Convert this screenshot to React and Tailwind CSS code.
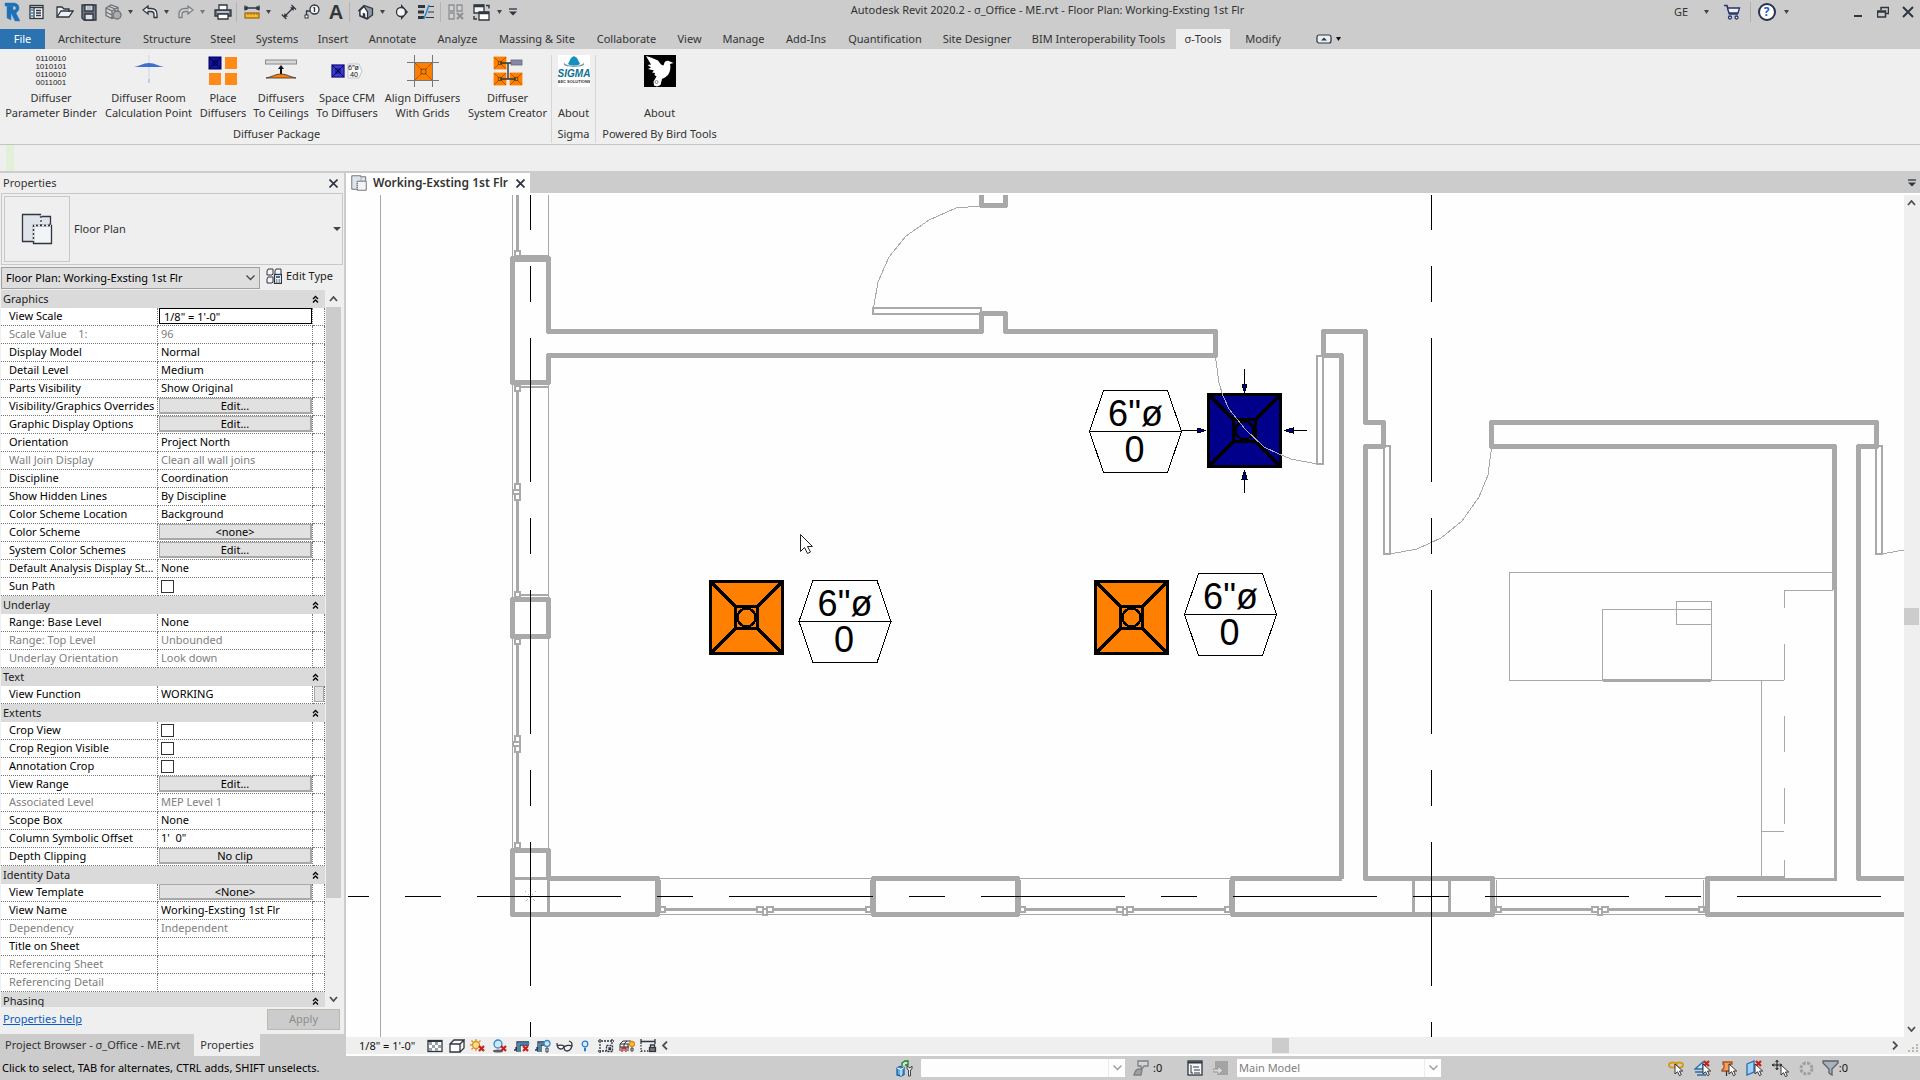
import React from "react";

const UI_FONT = "font-['Noto_Sans',sans-serif]";

function Ico({ w = 20, h = 20, children, className = "" }) {
  return (
    <svg
      width={w}
      height={h}
      viewBox={`0 0 ${w} ${h}`}
      fill="none"
      stroke="#2f3640"
      strokeWidth="1.3"
      className={`block shrink-0 ${className}`}
      aria-hidden="true"
    >
      {children}
    </svg>
  );
}

function Caret({ color = "#444", w = 6 }) {
  return (
    <Ico w={w} h={4}>
      <path d={`M0 0H${w}L${w / 2} 4Z`} fill={color} stroke="none" />
    </Ico>
  );
}

function Cross({ x = 0, y = 0, s = 6 }) {
  return <path d={`M${x} ${y}l${s} ${s}m0 -${s}l-${s} ${s}`} stroke="#c8201a" strokeWidth="2.2" />;
}

function Pointer({ x, y }) {
  return (
    <path
      d={`M${x} ${y}v10l2.5 -2.3l2 4l1.8 -1l-1.8 -3.7h3.2z`}
      fill="#fff"
      stroke="#222"
      strokeWidth="0.9"
    />
  );
}

/* ---------- Title bar ---------- */

const qat = [
  {
    label: "Revit", box: "w-6",
    icon: (
      <Ico w={16} h={20}>
        <path d="M1 1h8c4 0 6 2 6 5c0 3 -2 4 -3 5l4 8h-5l-4 -8v7l-4 -2v-12h6v4c2 0 3 -1 3 -2c0 -1 -1 -2 -3 -2h-8z" fill="#1f6fb5" stroke="#2b82c9" strokeWidth="0.5" />
      </Ico>
    ),
  },
  {
    label: "Home", box: "w-[26px]",
    icon: (
      <Ico w={16} h={16}>
        <rect x="1" y="1.5" width="13" height="13" fill="#f4f6f8" />
        <path d="M1 3.5h13M5 4v10M7 6.5h5M7 9h5M7 11.5h5" />
        <path d="M2 6h2M2 9h2M2 12h2" stroke="#2980c4" />
      </Ico>
    ),
  },
  {
    label: "Open", box: "w-[30px]",
    icon: (
      <Ico w={18} h={16}>
        <path d="M1 13V3h5l2 2h5v3M1 13l4 -6h12l-4 6z" fill="#eef1f4" />
      </Ico>
    ),
  },
  {
    label: "Save", box: "w-[18px]",
    icon: (
      <Ico w={16} h={17}>
        <path d="M1 1h14v15h-12l-2 -2z" fill="#6a7280" />
        <path d="M4 1h8v6h-8z" fill="#f6f8fa" />
        <path d="M4 10h8v6h-8z" fill="#dfe3e7" />
        <path d="M5.5 3h5M5.5 5h5" stroke="#a5acb5" />
      </Ico>
    ),
  },
  {
    label: "Synchronize", box: "w-[41px]", caret: "#444",
    icon: (
      <Ico w={17} h={17} className="opacity-60">
        <path d="M1 4l5 -3l7 2.5v8l-6 3l-6 -3zM1 4l6 3l6 -3.500M7 7v7M1 8l6 3M4 2.500l6 2.500v5" fill="#ddd" />
        <circle cx="12" cy="11" r="4" fill="#999" />
      </Ico>
    ),
  },
  {
    label: "Undo", box: "w-8", caret: "#444",
    icon: (
      <Ico w={16} h={16}>
        <path d="M1 6l5 -4v2.5h3c4 0 6 2 6 6v3h-3v-3c0 -2 -1 -3 -3 -3h-3v2.5z" fill="#eef1f4" />
      </Ico>
    ),
  },
  {
    label: "Redo", box: "w-10", caret: "#777",
    icon: (
      <Ico w={16} h={16} className="opacity-50">
        <path d="M15 6l-5 -4v2.5h-3c-4 0 -6 2 -6 6v3h3v-3c0 -2 1 -3 3 -3h3v2.5z" fill="#e4e4e4" />
      </Ico>
    ),
  },
  {
    label: "Print", box: "w-6", sep: true,
    icon: (
      <Ico w={18} h={16}>
        <path d="M5 6V1h8v5" fill="#fff" />
        <path d="M1 6h16v6h-16z" fill="#6a717c" />
        <path d="M4 10h10v5h-10z" fill="#fff" />
        <path d="M3 8h12" stroke="#e5e8eb" />
      </Ico>
    ),
  },
  {
    label: "Measure", box: "w-[39px]", caret: "#444",
    icon: (
      <Ico w={16} h={16}>
        <path d="M1 4h14M1 1.5v5M15 1.5v5M3.500 2.500l-2.500 1.500l2.500 1.500M12.500 2.500l2.500 1.500l-2.500 1.500" />
        <rect x="1" y="9" width="14" height="5" fill="#f7b731" stroke="#a06a10" />
        <path d="M4 9v2M7 9v2M10 9v2M13 9v2" stroke="#a06a10" strokeWidth="1" />
      </Ico>
    ),
  },
  {
    label: "Aligned Dimension", box: "w-[23px]",
    icon: (
      <Ico w={16} h={16}>
        <path d="M3 13L13 3M0.8 10.5l4.5 4.5M10.5 1l4.5 4.5" />
        <path d="M3 13l0.5 -4l3.5 3.5zM13 3l-4 0.5l3.5 3.5z" fill="#2f3640" stroke="none" />
      </Ico>
    ),
  },
  {
    label: "Tag by Category", box: "w-6",
    icon: (
      <Ico w={16} h={16}>
        <circle cx="10.5" cy="5.5" r="4.5" fill="#f4f4f4" />
        <path d="M10.5 3.2v4.8M9.5 4.2l1 -1M2.5 11V7h3.5" />
        <rect x="1" y="11" width="3" height="3" fill="#fff" strokeWidth="1" />
      </Ico>
    ),
  },
  { label: "Text", box: "w-6", text: "A", sep: true },
  {
    label: "Default 3D View", box: "w-10", caret: "#444",
    icon: (
      <Ico w={16} h={16}>
        <path d="M1 6.500l5 -5l8.500 3v6.500l-5.500 4l-7 -3v-5.500z" fill="#8e98a5" />
        <path d="M2 6.500l4 -4l3.500 5.500v6.500l-7.500 -3z" fill="#fff" />
        <path d="M5 9v3.500l2 0.800v-3.500z" fill="#2f3640" strokeWidth="0.5" />
      </Ico>
    ),
  },
  {
    label: "Section", box: "w-[22px]",
    icon: (
      <Ico w={16} h={16}>
        <path d="M7 0l7 8l-7 8z" fill="#2f3640" stroke="none" />
        <circle cx="7" cy="8" r="4.5" fill="#f4f4f4" />
      </Ico>
    ),
  },
  {
    label: "Thin Lines", box: "w-[26px]", sep: true,
    icon: (
      <Ico w={18} h={16}>
        <path d="M1 2.5h7M1 8h6M1 13.5h6" strokeWidth="3" />
        <path d="M12 2.5h5M11 8h6M9 13.5h8" strokeWidth="1.2" />
        <path d="M12 1L7 15" stroke="#2b8fd8" strokeWidth="1.6" />
      </Ico>
    ),
  },
  {
    label: "Close Inactive Views", box: "w-7",
    icon: (
      <Ico w={16} h={16} className="opacity-40">
        <path d="M1 1h5v6h-5zM9 1h5v6h-5zM1 9h5v6h-5z" fill="#ddd" />
        <path d="M9 9l6 6m0 -6l-6 6" strokeWidth="2" />
      </Ico>
    ),
  },
  {
    label: "Switch Windows", box: "w-[35px]", caret: "#444",
    icon: (
      <Ico w={18} h={17}>
        <path d="M1 1h10v8h-10z" fill="#f4f4f4" />
        <path d="M1 2h10" strokeWidth="2.5" />
        <path d="M6 8h10v8h-10z" fill="#fff" />
        <path d="M6 9h10" strokeWidth="2.5" />
        <path d="M13 1.5h3v3M1 12v3h3" strokeWidth="1.4" />
      </Ico>
    ),
  },
];

function TitleBar() {
  return (
    <header className="flex h-[29px] shrink-0 items-start bg-[#cccccc]">
      <div className="flex h-6 shrink-0 items-center">
        {qat.map((q) => (
          <React.Fragment key={q.label}>
            <button type="button" aria-label={q.label} className={`flex h-6 shrink-0 items-center justify-center gap-1.5 ${q.box}`}>
              {q.text ? <span className="font-['Liberation_Sans',sans-serif] text-xl leading-6 font-bold text-[#33373d]">{q.text}</span> : q.icon}
              {q.caret && <Caret color={q.caret} w={5} />}
            </button>
            {q.sep && <span className="mx-px h-5 w-px shrink-0 bg-[#b4b4b4]" />}
          </React.Fragment>
        ))}
        <button type="button" aria-label="Customize Quick Access Toolbar" className="flex h-6 w-4 items-center justify-center">
          <Ico w={8} h={8}>
            <path d="M0 1h8" />
            <path d="M0 3.5h8l-4 4z" fill="#2f3640" stroke="none" />
          </Ico>
        </button>
      </div>
      <h1 className="flex-1 truncate text-center text-[11px] leading-5 text-[#333]">
        Autodesk Revit 2020.2 - σ_Office - ME.rvt - Floor Plan: Working-Exsting 1st Flr
      </h1>
      <div className="ml-24 flex h-6 w-[250px] shrink-0 items-center text-[11px] text-[#333]">
        <span className="w-[34px] pl-1">GE</span>
        <span className="w-3"><Caret w={5} /></span>
        <button type="button" aria-label="App Store" className="ml-0.5 flex w-7 justify-center">
          <Ico w={17} h={16}>
            <path d="M0 1.500h3l2.500 8.500h8.500" stroke="#26346b" strokeWidth="1.6" />
            <path d="M3.500 4h12l-1.500 5h-9z" fill="#eef0f8" stroke="#26346b" />
            <circle cx="6" cy="13.5" r="1.5" fill="#fff" stroke="#26346b" />
            <circle cx="12.5" cy="13.5" r="1.5" fill="#fff" stroke="#26346b" />
          </Ico>
        </button>
        <span className="mx-1 h-5 w-px bg-[#b0b0b0]" />
        <button type="button" aria-label="Help" className="flex w-8 items-center justify-center gap-2 pl-1">
          <span className="flex h-[18px] w-[18px] shrink-0 items-center justify-center rounded-full border-2 border-[#26304f] bg-white text-[12px] font-bold text-[#2060c0]">?</span>
          <Caret w={5} />
        </button>
        <button type="button" aria-label="Minimize" className="ml-auto flex w-6 justify-center pt-2">
          <Ico w={8} h={2}><path d="M0 1h8" strokeWidth="2" /></Ico>
        </button>
        <button type="button" aria-label="Restore" className="flex w-[26px] justify-center">
          <Ico w={12} h={12}>
            <path d="M4 4V1.5h7.5v6H9" strokeWidth="1.5" />
            <path d="M0.5 5h8v6h-8zM0.5 6h8" strokeWidth="1.5" />
          </Ico>
        </button>
        <button type="button" aria-label="Close" className="flex w-6 justify-center">
          <Ico w={12} h={12}><path d="M1 1l10 10M11 1L1 11" strokeWidth="2" /></Ico>
        </button>
      </div>
    </header>
  );
}

/* ---------- Ribbon ---------- */

const tabs = [
  ["Architecture", "w-[89px]"],
  ["Structure", "w-[66px]"],
  ["Steel", "w-[46px]"],
  ["Systems", "w-[62px]"],
  ["Insert", "w-[50px]"],
  ["Annotate", "w-[69px]"],
  ["Analyze", "w-[61px]"],
  ["Massing & Site", "w-[98px]"],
  ["Collaborate", "w-[81px]"],
  ["View", "w-[45px]"],
  ["Manage", "w-[63px]"],
  ["Add-Ins", "w-[62px]"],
  ["Quantification", "w-[96px]"],
  ["Site Designer", "w-[88px]"],
  ["BIM Interoperability Tools", "w-[155px]"],
  ["σ-Tools", "w-[54px]"],
  ["Modify", "w-[66px]"],
];

function TabRow() {
  return (
    <nav className="flex h-5 shrink-0 items-stretch bg-[#cccccc] text-[11px] leading-5 text-[#333]">
      <button type="button" className="w-[45px] bg-[#2a73b0] text-white">File</button>
      {tabs.map(([name, w]) => (
        <button
          key={name}
          type="button"
          className={`shrink-0 whitespace-nowrap ${w} ${name === "σ-Tools" ? "bg-[#efefef]" : ""}`}
        >
          {name}
        </button>
      ))}
      <button type="button" aria-label="Minimize ribbon" className="ml-5 flex items-center gap-1">
        <Ico w={16} h={10}>
          <rect x="1" y="1" width="14" height="8" rx="2" fill="#e8eef4" strokeWidth="1.2" />
          <path d="M5 6.5h6l-3 -3z" fill="#2f3640" stroke="none" />
        </Ico>
        <Caret color="#111" w={5} />
      </button>
    </nav>
  );
}

function MiniDiffuser({ x, y, s, fill = "#ff8000" }) {
  const q = s * 0.36;
  return (
    <g stroke="#7a3c00" strokeWidth="0.8">
      <rect x={x} y={y} width={s} height={s} fill={fill} stroke={fill} />
      <path
        d={`M${x} ${y}l${q} ${q}M${x + s} ${y}l-${q} ${q}M${x} ${y + s}l${q} -${q}M${x + s} ${y + s}l-${q} -${q}`}
        opacity="0.7"
      />
      <rect x={x + q} y={y + q} width={s - 2 * q} height={s - 2 * q} stroke="#222" opacity="0.7" />
    </g>
  );
}

const diffuserTools = [
  {
    lines: ["Diffuser", "Parameter Binder"], box: "w-[98px]",
    icon: (
      <span className="flex h-8 flex-col font-['Liberation_Sans',sans-serif] text-[8px] leading-2 text-[#222]">
        <span>0110010</span>
        <span>1010101</span>
        <span>0110010</span>
        <span>0011001</span>
      </span>
    ),
  },
  {
    lines: ["Diffuser Room", "Calculation Point"], box: "w-[97px]",
    icon: (
      <Ico w={32} h={32}>
        <path d="M16 0v28" stroke="#c3d0ee" strokeWidth="0.8" />
        <path d="M1 12c6 -1 9 -4 15 -4s9 3 15 4z" fill="#3f6fd0" stroke="none" />
        <path d="M15 24h2v4h-2z" fill="#b9cdf0" stroke="none" />
      </Ico>
    ),
  },
  {
    lines: ["Place", "Diffusers"], box: "w-[52px]",
    icon: (
      <Ico w={32} h={32}>
        <rect x="2" y="2" width="12" height="12" fill="#12129a" stroke="#000060" strokeWidth="1" />
        <path d="M2 2l12 12M14 2L2 14M6 6h4v4h-4z" stroke="#000040" strokeWidth="0.8" />
        <rect x="18" y="2" width="12" height="12" fill="#ff8a18" stroke="none" />
        <rect x="2" y="18" width="12" height="12" fill="#ff8a18" stroke="none" />
        <rect x="18" y="18" width="12" height="12" fill="#ff8a18" stroke="none" />
      </Ico>
    ),
  },
  {
    lines: ["Diffusers", "To Ceilings"], box: "w-16",
    icon: (
      <Ico w={32} h={32}>
        <rect x="0.5" y="5" width="31" height="4" fill="#d8d8d8" stroke="#8a8a8a" strokeWidth="1" />
        <path d="M16 10l3 4h-2v5h-2v-5h-2z" fill="#111" stroke="none" />
        <path d="M1 23c6 -1 9 -4 15 -4s9 3 15 4z" fill="#ff8000" stroke="#333" strokeWidth="0.8" />
      </Ico>
    ),
  },
  {
    lines: ["Space CFM", "To Diffusers"], box: "w-[68px]",
    icon: (
      <Ico w={32} h={32}>
        <rect x="1" y="10" width="12" height="12" fill="#3c3cd0" stroke="#15158a" />
        <path d="M1 10l12 12M13 10L1 22M5 14h4v4h-4z" stroke="#000050" strokeWidth="0.9" />
        <path d="M17 9h11l3 7l-3 7h-11z" fill="#f8f8f8" stroke="#bbb" strokeWidth="0.8" />
        <text x="17" y="15" fontSize="7" fill="#111" stroke="none">6"ø</text>
        <text x="19" y="22" fontSize="7" fill="#111" stroke="none">40</text>
      </Ico>
    ),
  },
  {
    lines: ["Align Diffusers", "With Grids"], box: "w-[83px]",
    icon: (
      <Ico w={32} h={32}>
        <MiniDiffuser x={8} y={8} s={17} />
        <path d="M7.5 0v32M25.5 0v32M0 7.5h32M0 25.5h32" stroke="#777" strokeWidth="1" />
      </Ico>
    ),
  },
  {
    lines: ["Diffuser", "System Creator"], box: "w-[87px]",
    icon: (
      <Ico w={32} h={32}>
        <MiniDiffuser x={2} y={2} s={12} />
        <MiniDiffuser x={2} y={18} s={12} />
        <MiniDiffuser x={18} y={18} s={12} />
        <rect x="19" y="5" width="11" height="5" fill="#8888aa" stroke="#667" strokeWidth="0.8" />
        <path d="M8 8h11M16 8v16M8 24h16" stroke="#333" strokeWidth="1.4" />
      </Ico>
    ),
  },
];

const sigmaTool = [
  {
    lines: ["", "About"], box: "w-[43px]",
    icon: (
      <Ico w={32} h={32}>
        <rect width="32" height="32" fill="#fff" stroke="none" />
        <path d="M6 7c0 5 20 5 20 0c0 3 2 4 -10 5c-12 -1 -10 -2 -10 -5z" fill="#7f98a6" stroke="none" />
        <path d="M10 9l3 -6l3 -2l3 2l3 6c-3 2 -9 2 -12 0z" fill="#168fc0" stroke="none" />
        <text x="16" y="22" fontSize="10" fontWeight="bold" fontStyle="italic" textAnchor="middle" fill="#0d6f95" stroke="none" className="font-['Liberation_Sans',sans-serif]">SIGMA</text>
        <text x="16" y="28" fontSize="4" fontWeight="bold" textAnchor="middle" fill="#333" stroke="none" className="font-['Liberation_Sans',sans-serif]">AEC SOLUTIONS</text>
      </Ico>
    ),
  },
];

const birdTool = [
  {
    lines: ["", "About"], box: "w-[127px]",
    icon: (
      <Ico w={32} h={32}>
        <rect width="32" height="32" fill="#000" stroke="none" />
        <path d="M2 1l5 1.500l7 3l3 4l2.500 1l1 -3c1 -2 4 -2.500 5.500 -1l3.500 1.500l-3.500 1c1 4 0 8 -2 11c-2 2 -4 3 -6 4l-1.500 6l-3.500 1.500l-3 -1l-0.500 -4l3 -5l-2 -1.500l0.500 -2l-3 -0.500l2 -2l-6 -1.500l3 -1.500l-3.500 -2.500l3.500 -0.500z" fill="#fff" stroke="none" />
        <circle cx="12.500" cy="27" r="1.5" stroke="#888" strokeWidth="1" />
      </Ico>
    ),
  },
];

function Panel({ title, tools }) {
  return (
    <section className="flex flex-col border-r border-[#d6d6d6] last:border-r-0">
      <div className="flex">
        {tools.map((t) => (
          <button key={t.lines.join()} type="button" className={`flex shrink-0 flex-col items-center ${t.box}`}>
            {t.icon}
            <span className="mt-[3px] block h-[30px] text-[11px] leading-[15px] whitespace-nowrap">
              {t.lines[0] || "\u00a0"}
              <br />
              {t.lines[1]}
            </span>
          </button>
        ))}
      </div>
      <h2 className="mt-1 text-center text-[11px] leading-5 whitespace-nowrap">{title}</h2>
    </section>
  );
}

function Ribbon() {
  return (
    <>
      <div className="flex h-24 shrink-0 border-b border-[#c4c4c4] bg-[#efefef] pt-1.5 pb-px pl-0.5 text-[#333]">
        <Panel title="Diffuser Package" tools={diffuserTools} />
        <Panel title="Sigma" tools={sigmaTool} />
        <Panel title="Powered By Bird Tools" tools={birdTool} />
      </div>
      <div className="flex h-[26px] shrink-0 bg-[#efefef] pl-1.5">
        <span className="w-2 bg-[#e2f0d9]" />
      </div>
    </>
  );
}

/* ---------- Properties ---------- */

const groups = [
  {
    name: "Graphics",
    rows: [
      { label: "View Scale", value: '1/8" = 1\'-0"', kind: "input" },
      { label: "Scale Value    1:", value: "96", dim: true },
      { label: "Display Model", value: "Normal" },
      { label: "Detail Level", value: "Medium" },
      { label: "Parts Visibility", value: "Show Original" },
      { label: "Visibility/Graphics Overrides", value: "Edit...", kind: "button" },
      { label: "Graphic Display Options", value: "Edit...", kind: "button" },
      { label: "Orientation", value: "Project North" },
      { label: "Wall Join Display", value: "Clean all wall joins", dim: true },
      { label: "Discipline", value: "Coordination" },
      { label: "Show Hidden Lines", value: "By Discipline" },
      { label: "Color Scheme Location", value: "Background" },
      { label: "Color Scheme", value: "<none>", kind: "button" },
      { label: "System Color Schemes", value: "Edit...", kind: "button" },
      { label: "Default Analysis Display St...", value: "None" },
      { label: "Sun Path", kind: "check" },
    ],
  },
  {
    name: "Underlay",
    rows: [
      { label: "Range: Base Level", value: "None" },
      { label: "Range: Top Level", value: "Unbounded", dim: true },
      { label: "Underlay Orientation", value: "Look down", dim: true },
    ],
  },
  { name: "Text", rows: [{ label: "View Function", value: "WORKING", more: true }] },
  {
    name: "Extents",
    rows: [
      { label: "Crop View", kind: "check" },
      { label: "Crop Region Visible", kind: "check" },
      { label: "Annotation Crop", kind: "check" },
      { label: "View Range", value: "Edit...", kind: "button" },
      { label: "Associated Level", value: "MEP Level 1", dim: true },
      { label: "Scope Box", value: "None" },
      { label: "Column Symbolic Offset", value: "1'  0\"" },
      { label: "Depth Clipping", value: "No clip", kind: "button" },
    ],
  },
  {
    name: "Identity Data",
    rows: [
      { label: "View Template", value: "<None>", kind: "button" },
      { label: "View Name", value: "Working-Exsting 1st Flr" },
      { label: "Dependency", value: "Independent", dim: true },
      { label: "Title on Sheet", value: "" },
      { label: "Referencing Sheet", value: "", dim: true },
      { label: "Referencing Detail", value: "", dim: true },
    ],
  },
  { name: "Phasing", rows: [] },
];

function PropValue({ row, id }) {
  if (row.kind === "button") {
    return (
      <button id={id} type="button" className="block h-4 w-full border border-r-2 border-b-2 border-[#a8a8a8] bg-[#e1e1e1] text-center leading-[13px]">
        {row.value}
      </button>
    );
  }
  if (row.kind === "check") {
    return <input id={id} type="checkbox" className="mt-0.5 ml-0.5 block h-[13px] w-[13px] appearance-none border border-[#333] bg-white" />;
  }
  if (row.kind === "input") {
    return <input id={id} defaultValue={row.value} className="block h-4 w-full border border-black bg-white px-1 leading-[14px] outline-none" />;
  }
  return <span className="block truncate pl-0.5 leading-4 whitespace-pre">{row.value}</span>;
}

function PropertyTable() {
  return (
    <table className="w-full table-fixed border-separate border-spacing-0 text-[11px]">
      <colgroup>
        <col />
        <col className="w-[155px]" />
        <col className="w-3" />
      </colgroup>
      {groups.map((g) => (
        <tbody key={g.name}>
          <tr className="h-[18px] bg-[#dadada]">
            <th colSpan={3} className="p-0 font-normal">
              <button type="button" className="flex h-[18px] w-full items-center justify-between pr-1.5 pl-0.5 text-left leading-4 text-[#1c1c1c]">
                <span>{g.name}</span>
                <Ico w={7} h={8}>
                  <path d="M1 4l2.500 -2.500l2.500 2.500M1 7.500l2.500 -2.500l2.500 2.500" stroke="#000" />
                </Ico>
              </button>
            </th>
          </tr>
          {g.rows.map((r) => {
            const id = r.label.replace(/\W+/g, "-").toLowerCase();
            return (
              <tr key={r.label} className={`h-[18px] bg-white align-top ${r.dim ? "text-[#808080]" : "text-black"}`}>
                <th scope="row" className="h-[18px] truncate border-r border-b border-dotted border-[#777] p-0 pl-2 text-left leading-4 font-normal whitespace-pre">
                  {r.kind ? <label htmlFor={id}>{r.label}</label> : r.label}
                </th>
                <td className="h-[18px] border-r border-b border-dotted border-[#777] p-0 pl-px">
                  <PropValue row={r} id={id} />
                </td>
                <td className="h-[18px] border-r border-b border-dotted border-[#777] p-0">
                  {r.more && <button type="button" aria-label="Browse" className="ml-px block h-4 w-[10px] border border-[#a8a8a8] bg-[#e1e1e1]" />}
                </td>
              </tr>
            );
          })}
        </tbody>
      ))}
    </table>
  );
}

function SheetIcon({ w = 32, h = 32 }) {
  return (
    <svg width={w} height={h} viewBox="0 0 32 32" fill="none" stroke="#2f3640" strokeWidth="1.3" className="block shrink-0" aria-hidden="true">
      <path d="M1.5 1.5h18v2h10v8h-1v17h-27z" fill="#dfe4ea" />
      <path d="M12.500 12.500h18v18h-18z" fill="#f2f4f8" />
      <path d="M12.500 30V12.500H30M20 2v10" stroke="#e8ecf0" />
      <path d="M12.500 30V12.500H30M20 3v9" strokeDasharray="2 2" />
    </svg>
  );
}

function Properties() {
  return (
    <aside className="flex w-[344px] shrink-0 flex-col bg-[#cccccc]">
      <div className="flex min-h-0 flex-1 flex-col bg-[#efefef]">
        <div className="flex h-5 shrink-0 items-center justify-between pr-1.5 pl-[3px] text-[11px] text-[#333]">
          <h2>Properties</h2>
          <button type="button" aria-label="Close palette">
            <Ico w={9} h={9}><path d="M0.5 0.5l8 8M8.5 0.5l-8 8" strokeWidth="1.6" /></Ico>
          </button>
        </div>
        <button type="button" className="mx-px flex h-[72px] shrink-0 items-center border border-[#c8c8c8] pr-px pl-0.5 text-[11px] text-[#333]">
          <span className="flex h-[66px] w-[66px] items-center justify-center border border-[#c8c8c8]">
            <SheetIcon />
          </span>
          <span className="flex-1 pl-1 text-left">Floor Plan</span>
          <Caret w={8} />
        </button>
        <div className="mt-0.5 flex h-[23px] shrink-0 items-start gap-1.5 pl-px text-[11px]">
          <button type="button" aria-haspopup="listbox" className="flex h-[22px] w-[259px] items-center justify-between border border-[#a0a0a0] bg-[#dedede] px-1 text-black">
            Floor Plan: Working-Exsting 1st Flr
            <Ico w={9} h={6}><path d="M0.5 0.5l4 4l4 -4" stroke="#444" /></Ico>
          </button>
          <button type="button" className="flex h-[18px] items-center gap-1 text-[#1c1c1c]">
            <Ico w={16} h={16}>
              <path d="M1 3l1 -2h5v5l-1 1h-5zM9 3l1 -2h5v5M1 11l1 -2h5v5l-1 1h-5zM9 3v4h4" strokeWidth="1" fill="#f4f4f4" />
              <rect x="8.5" y="6.5" width="7" height="9" fill="#fff" />
              <path d="M10 9h4" stroke="#2a73b0" strokeWidth="2" />
              <path d="M10 12h1.500M12.500 12h1.500M10 14h1.500M12.500 14h1.500" strokeWidth="1" />
            </Ico>
            Edit Type
          </button>
        </div>
        <div className="flex min-h-0 flex-1 overflow-hidden pr-[3px] pl-px">
          <div className="min-w-0 flex-1 overflow-hidden">
            <PropertyTable />
          </div>
          <div className="ml-px flex w-[15px] shrink-0 flex-col items-center">
            <span className="flex h-[17px] items-center">
              <Ico w={9} h={6}><path d="M1 5l3.500 -4l3.500 4" stroke="#505050" strokeWidth="1.8" /></Ico>
            </span>
            <span className="w-full flex-[591] bg-[#cccccc]" />
            <span className="flex-[93]" />
            <span className="flex h-4 items-center">
              <Ico w={9} h={6}><path d="M1 1l3.500 4l3.500 -4" stroke="#505050" strokeWidth="1.8" /></Ico>
            </span>
          </div>
        </div>
        <div className="flex h-[27px] shrink-0 items-start justify-between pt-0.5 pr-1 pl-[3px] text-[11px]">
          <a href="#help" className="leading-5 text-[#0a5ec2] underline">Properties help</a>
          <button type="button" disabled className="h-[21px] w-[73px] border border-[#bdb9ae] bg-[#cccccc] text-[#8c8c8c]">Apply</button>
        </div>
      </div>
      <div className="flex h-[22px] shrink-0 text-[11px] leading-[22px] text-[#333]">
        <button type="button" className="w-[194px] pl-[5px] text-left whitespace-nowrap">Project Browser - σ_Office - ME.rvt</button>
        <button type="button" className="w-[66px] bg-[#efefef]">Properties</button>
      </div>
    </aside>
  );
}

/* ---------- Floor plan ---------- */

function Diffuser({ x, y, fill }) {
  return (
    <g transform={`translate(${x} ${y})`} stroke="#000" strokeWidth="3" fill={fill}>
      <rect x="-36" y="-36" width="72" height="72" />
      <path d="M-36 -36l25 25M36 -36l-25 25M-36 36l25 -25M36 36l-25 -25" />
      <rect x="-11" y="-11" width="22" height="22" />
      <circle r="9" strokeWidth="2.5" />
    </g>
  );
}

function Tag({ x, y, top, bottom }) {
  return (
    <g transform={`translate(${x} ${y})`}>
      <path d="M-46 0l14 -41h64l14 41l-14 41h-64zM-46 0h92" fill="#fefefe" stroke="#000" strokeWidth="1" />
      <text x="0" y="-6" fontSize="36" textAnchor="middle" className="font-['Liberation_Sans',sans-serif]">{top}</text>
      <text x="-1" y="30" fontSize="36" textAnchor="middle" className="font-['Liberation_Sans',sans-serif]">{bottom}</text>
    </g>
  );
}

// One glazed opening in the bottom wall, from jamb to jamb.
function WallWindow({ x1, x2 }) {
  const mid = Math.floor((x1 + x2) / 2);
  return (
    <g>
      <path d={`M${x1} 878.5H${x2}M${x1} 914.5H${x2}M${x1 + 1.5} 880V912M${x2 - 1.5} 880V912`} strokeWidth="1" />
      <path d={`M${x1 + 6} 909.5H${mid - 8}M${mid + 8} 909.5H${x2 - 6}`} strokeWidth="3" />
      <path
        d={`M${x1 + 1} 907h5v5h-5zM${x2 - 6} 907h5v5h-5zM${mid - 8} 907h6v5h-6zM${mid + 2} 907h6v5h-6zM${mid - 2} 909h4v6h-4z`}
        strokeWidth="1.5"
      />
    </g>
  );
}

function SideWindow({ y1, y2 }) {
  const mid = Math.round((y1 + y2) / 2);
  return (
    <g>
      <path d={`M512.5 ${y1}V${y2}M548.5 ${y1}V${y2}`} strokeWidth="1" />
      <path d={`M517.5 ${y1 + 6}V${mid - 8}M517.5 ${mid + 8}V${y2 - 6}`} strokeWidth="3" />
      <path
        d={`M515 ${y1 + 1}h5v5h-5zM515 ${y2 - 6}h5v5h-5zM515 ${mid - 8}h5v6h-5zM515 ${mid + 2}h5v6h-5zM513 ${mid - 2}h7v4h-7z`}
        strokeWidth="1.5"
      />
    </g>
  );
}

function FloorPlan() {
  return (
    <svg className="block h-full w-full bg-[#fefefe]" role="img" aria-label="Floor plan">
      <g transform="translate(-346 -195)" shapeRendering="crispEdges">
        <g fill="none" stroke="#a9a9a9">
          {/* walls */}
          <g strokeWidth="5" strokeLinejoin="round">
            <path d="M981.5 190V205.5H1005.5V190" />
            <path d="M512.5 258.5H548.5V331.5H981.5V313.5H1005.5V331.5H1215.5V355.5H548.5V382.5H512.5Z" />
            <path d="M514 258.5H548" strokeWidth="7" />
            <path d="M512.5 599.5H548.5V636.5H512.5Z" />
            <path d="M548.5 878V850.5H512.5V914.5H657.5V878.5H548.5" />
            <path d="M873.5 878.5H1017.5V914.5H873.5Z" />
            <path d="M1341.5 878.5H1232.5V914.5H1492.5V878.5H1365.5V446.5H1383.5V422.5H1365.5V331.5H1323.5V355.5H1341.5V878.5" />
            <path d="M1834.5 590V446.5H1491.5V422.5H1876.5V446.5H1858.5V878.5H1910M1910 914.5H1707.5V878.5H1785" />
          </g>
          <path d="M1835.5 588V879.5H1784" strokeWidth="3" />
          <path d="M513 878.5H548.5V914M1413.5 880V914M1449.5 880V914" strokeWidth="3" />

          {/* glazing */}
          <path d="M512.5 195V256M548.5 195V256" strokeWidth="1" />
          <path d="M517.5 195V252" strokeWidth="3" />
          <path d="M515 251h5v6h-5zM520 387H549M520 595H549" strokeWidth="1.5" />
          <SideWindow y1={385} y2={598} />
          <SideWindow y1={638} y2={849} />
          <WallWindow x1={659} x2={872} />
          <WallWindow x1={1019} x2={1231} />
          <WallWindow x1={1495} x2={1705} />

          {/* doors */}
          <g strokeWidth="2">
            <path d="M873 308H981V314H873Z" />
            <path d="M1384 446H1390V554H1384Z" />
            <path d="M1876 446H1882V554H1876Z" />
          </g>
          <g strokeWidth="1">
            <path d="M873.5 308L878 282L889 257L906 236L929 220L956 208L980 206" />
            <path d="M1390 554L1417 549L1441 538L1462 521L1479 497L1488 475L1491.5 448" />
            <path d="M1882 554L1904 550" />
          </g>

          {/* furniture */}
          <g strokeWidth="1">
            <path d="M380.5 195V1100" />
            <path d="M1833 572.5H1509.5V680.5H1784M1602.5 609.5H1711.5V679.5H1602.5ZM1603 681.5H1711M1676.5 601.5H1711.5V624.5H1676.5Z" />
            <path d="M1833 590.5H1784.5V608M1784.5 644V680M1784.5 716V752M1784.5 788V824M1784.5 860V877" />
            <path d="M1761.5 680V878M1761.5 831.5H1784" />
          </g>
        </g>

        {/* column grid */}
        <g stroke="#000" strokeWidth="1" fill="none" strokeDasharray="144 36 36 36">
          <path d="M530.5 195V1100" strokeDashoffset="109" />
          <path d="M1431.5 195V1100" strokeDashoffset="109" />
          <path d="M348 896.5H1883" strokeDashoffset="123" />
        </g>
        <path d="M525 891l11 11m0 -11l-11 11" stroke="#9fc5a8" strokeDasharray="2 2" />

        {/* air terminals */}
        <Diffuser x={746.5} y={617.5} fill="#ff8000" />
        <Diffuser x={1131.5} y={617.5} fill="#ff8000" />
        <Diffuser x={1244.5} y={430.5} fill="#00008b" />
        <g stroke="#000" strokeWidth="1" fill="#00008b">
          <path d="M1244.5 369V384M1244.5 493V478M1181 430.5H1197M1307 430.5H1293" />
          <path d="M1242 384h5l-1 4l-1.5 4l-1.5 -4zM1242 479h5l-1 -4l-1.5 -4l-1.5 4zM1197 428v5l4 -1l4 -1.5l-4 -1.5zM1293 428v5l-4 -1l-4 -1.5l4 -1.5z" />
        </g>
        <g fill="none" stroke="#a9a9a9">
          <path d="M1317 356H1323V464H1317Z" strokeWidth="2" />
          <path d="M1215.5 357L1219 383L1223 396L1229 409L1245 429L1264 447L1279 454L1291 459L1317 464" strokeWidth="1" />
        </g>

        <Tag x={845} y={621.5} top={'6"ø'} bottom="0" />
        <Tag x={1230.5} y={614.5} top={'6"ø'} bottom="0" />
        <Tag x={1135.5} y={431.5} top={'6"ø'} bottom="0" />
      </g>
      <path
        d="M454.5 339.5v17l4 -4l3 6l3 -1.500l-3 -5.500h5z"
        fill="#fff"
        stroke="#222"
        strokeWidth="1"
      />
    </svg>
  );
}

/* ---------- View control bar ---------- */

const viewControls = [
  ["Detail level", "w-[22px]", (
    <Ico w={16} h={14}>
      <rect x="1" y="1.5" width="14" height="11" fill="#fff" />
      <path d="M2 3h3v3h-3zM8 3h3v3h-3zM5 6h3v3h-3zM11 6h3v3h-3zM2 9h3v3h-3zM8 9h3v3h-3z" fill="#9aa2ac" stroke="none" />
      <path d="M1 2h14" strokeWidth="2" />
    </Ico>
  )],
  ["Visual style", "w-[22px]", (
    <Ico w={16} h={14}>
      <path d="M1 5h10v8h-10zM1 5l4 -4h10l-4 4M15 1v8l-4 4" fill="#fff" />
    </Ico>
  )],
  ["Sun path off", "w-[20px]", (
    <Ico w={16} h={14}>
      <circle cx="6" cy="6" r="3.5" fill="#fbe08c" stroke="#dc9020" />
      <path d="M6 0v2M6 10v2M0 6h2M1.500 1.500l1.500 1.500M10.500 1.500l-1.500 1.500M1.500 10.500l1.500 -1.500" stroke="#dc9020" />
      <Cross x={9} y={7} s={5} />
    </Ico>
  )],
  ["Shadows off", "w-[24px]", (
    <Ico w={16} h={14}>
      <ellipse cx="6" cy="12" rx="5" ry="1.5" fill="#5a6068" stroke="none" />
      <circle cx="6" cy="5" r="4" fill="#cde6f8" stroke="#3a8ac8" />
      <Cross x={9} y={7} s={5} />
    </Ico>
  )],
  ["Crop view off", "w-[20px]", (
    <Ico w={16} h={14}>
      <path d="M0 11h2v-3M3 13V3h12M6 13V6h9" />
      <path d="M4.500 13V4.500h11" stroke="#2b8fd8" strokeWidth="1.5" />
      <Cross x={9} y={7} s={5} />
    </Ico>
  )],
  ["Show crop region", "w-[22px]", (
    <Ico w={16} h={14}>
      <path d="M0 11h2v-3M3 13V3h7M6 13V6h3" />
      <path d="M4.500 13V4.500h5" stroke="#2b8fd8" strokeWidth="1.5" />
      <circle cx="12" cy="4.5" r="3" fill="#cde6f8" stroke="#3a8ac8" />
      <path d="M11 9h2v4h-2z" fill="#fff" strokeWidth="1" />
    </Ico>
  )],
  ["Temporary hide/isolate", "w-[20px]", (
    <Ico w={17} h={14}>
      <path d="M1 4c0 3 1 6 4 6c2 0 3 -2 3 -3c-2 -1 -5 -1 -7 0" fill="#fff" />
      <path d="M8 8c0 2 1 4 3 4c3 0 4 -2 5 -5c-2 -1 -6 -1 -8 1M16 7c0 -3 0 -4 -3 -5" />
    </Ico>
  )],
  ["Reveal hidden elements", "w-[22px]", (
    <Ico w={10} h={14}>
      <circle cx="5" cy="5" r="2.8" fill="#d9ecfa" stroke="#2b7cc8" strokeWidth="1.2" />
      <path d="M4.500 9h1v3h-1z" stroke="#2b7cc8" strokeWidth="1" />
    </Ico>
  )],
  ["Temporary view properties", "w-[20px]", (
    <Ico w={16} h={14}>
      <path d="M14 5V2h-12v10h6M2 0v2h-2M14 0v2h2M2 14v-2h-2" strokeDasharray="2 1" />
      <rect x="8.5" y="6.5" width="6" height="6" strokeDasharray="2 1" />
      <path d="M11 9h1.500v1.500h-1.500z" fill="#333" />
    </Ico>
  )],
  ["Analytical model", "w-[22px]", (
    <Ico w={16} h={14}>
      <path d="M1 12V5l3 -3h8M5 12V5l3 -3M9 12V5M1 5h9M1 8h9" strokeWidth="1" />
      <path d="M3 13V8M7 13V8M3 9h4" stroke="#c8201a" />
      <circle cx="13" cy="5" r="2.5" fill="#ffc040" stroke="#e08a10" />
      <path d="M12 9h2v3h-2z" strokeWidth="1" />
    </Ico>
  )],
  ["Reveal constraints", "w-[20px]", (
    <Ico w={17} h={14}>
      <path d="M1 0v5M15 0v5M1 2.500h14" />
      <path d="M1 6v7M1 12h8" strokeDasharray="1.5 1.5" />
      <rect x="9.5" y="8.5" width="6" height="4" fill="#777" />
      <path d="M10.500 8V6h4v2" />
    </Ico>
  )],
];

function ViewControlBar() {
  return (
    <div className="flex h-[17px] shrink-0 items-center bg-[#efefef]">
      <button type="button" className="w-[78px] pl-[13px] text-left text-[11px] leading-4 whitespace-nowrap text-[#111]">
        1/8&quot; = 1'-0&quot;
      </button>
      {viewControls.map(([label, w, icon]) => (
        <button key={label} type="button" aria-label={label} className={`flex shrink-0 justify-center ${w}`}>{icon}</button>
      ))}
      <div className="flex h-[15px] flex-1 items-center pl-1">
        <Ico w={6} h={9}><path d="M5 0.5l-4 4l4 4" stroke="#505050" strokeWidth="1.8" /></Ico>
        <span className="flex-[605]" />
        <span className="h-[15px] w-[17px] bg-[#cccccc]" />
        <span className="flex-[605]" />
        <Ico w={6} h={9}><path d="M1 0.5l4 4l-4 4" stroke="#505050" strokeWidth="1.8" /></Ico>
        <Ico w={22} h={15}>
          <path d="M18 6h2v2h-2zM14 9h2v2h-2zM18 9h2v2h-2zM10 12h2v2h-2zM14 12h2v2h-2zM18 12h2v2h-2z" fill="#bdb6aa" stroke="none" />
        </Ico>
      </div>
    </div>
  );
}

function Workspace() {
  return (
    <main className="ml-0.5 flex min-w-0 flex-1 flex-col bg-white">
      <div className="flex h-5 shrink-0 items-center justify-between bg-[#cccccc] pr-1">
        <div className="flex h-5 w-[184px] items-center bg-[#fefefe] pl-[5px] text-xs font-semibold text-[#333]">
          <SheetIcon w={16} h={16} />
          <span className="flex-1 pl-1.5 whitespace-nowrap">Working-Exsting 1st Flr</span>
          <button type="button" aria-label="Close view" className="mr-[5px]">
            <Ico w={9} h={9}><path d="M0.5 0.5l8 8M8.5 0.5l-8 8" strokeWidth="1.8" /></Ico>
          </button>
        </div>
        <button type="button" aria-label="View list">
          <Ico w={8} h={8}>
            <path d="M0 1h8" />
            <path d="M0 3.5h8l-4 4z" fill="#2f3640" stroke="none" />
          </Ico>
        </button>
      </div>
      <div className="flex min-h-0 flex-1 pt-0.5">
        <div className="min-w-0 flex-1 overflow-hidden">
          <FloorPlan />
        </div>
        <div className="flex w-4 shrink-0 flex-col items-center bg-[#efefef] pr-px">
          <span className="flex h-4 items-center">
            <Ico w={9} h={6}><path d="M1 5l3.500 -4l3.500 4" stroke="#505050" strokeWidth="1.8" /></Ico>
          </span>
          <span className="flex-[397]" />
          <span className="h-[17px] w-full bg-[#cccccc]" />
          <span className="flex-[397]" />
          <span className="flex h-4 items-center">
            <Ico w={9} h={6}><path d="M1 1l3.500 4l3.500 -4" stroke="#505050" strokeWidth="1.8" /></Ico>
          </span>
        </div>
      </div>
      <ViewControlBar />
      <div className="h-0.5 shrink-0 bg-white" />
    </main>
  );
}

/* ---------- Status bar ---------- */

const selectionTools = [
  ["Select links", (
    <>
      <ellipse cx="5" cy="5" rx="4" ry="2.5" stroke="#d89a18" strokeWidth="2" />
      <ellipse cx="11" cy="5" rx="4" ry="2.5" stroke="#d89a18" strokeWidth="2" />
      <Pointer x={7} y={4} />
    </>
  )],
  ["Select underlay elements", (
    <>
      <path d="M1 9l8 -7v7zM1 12h10M3 15h9" fill="#cfe4f5" stroke="#2a6ca8" />
      <Cross x={10} y={1} s={5} />
      <Pointer x={9} y={4} />
    </>
  )],
  ["Select pinned elements", (
    <>
      <path d="M3 2h9v2h-2v4l2 2v1h-10v-1l2 -2v-4h-1z" fill="#f4a060" stroke="#b0501a" />
      <path d="M6.500 11v5" />
      <Pointer x={9} y={4} />
    </>
  )],
  ["Select elements by face", (
    <>
      <path d="M1 4l7 -3v11l-7 3z" fill="#9fd0f5" stroke="#2a6ca8" />
      <Cross x={10} y={1} s={5} />
      <Pointer x={9} y={4} />
    </>
  )],
  ["Drag elements on selection", (
    <>
      <path d="M5 0v10M0 5h10M3.500 2l1.500 -1.500l1.500 1.500M3.500 8l1.500 1.500l1.500 -1.500M2 3.500l-1.500 1.500l1.500 1.500M8 3.500l1.500 1.500l-1.500 1.500" stroke="#111" strokeWidth="1" />
      <Pointer x={9} y={5} />
    </>
  )],
  ["Background processes", (
    <circle cx="8.5" cy="8.5" r="5.5" stroke="#a0a0a0" strokeWidth="3" strokeDasharray="3 1.3" />
  )],
];

function StatusCombo({ id, label, value }) {
  return (
    <div className="relative h-[18px] w-[204px] shrink-0">
      <select
        id={id}
        aria-label={label}
        defaultValue={value}
        className="block h-[18px] w-full appearance-none bg-[#fdfdfd] pl-0.5 text-[11px] leading-[18px] text-[#808080]"
      >
        <option value={value}>{value}</option>
      </select>
      <span className="pointer-events-none absolute inset-y-0 right-0 flex w-[17px] items-center justify-center border-l border-[#ececec]">
        <Ico w={9} h={6}><path d="M0.5 0.5l4 4l4 -4" stroke="#999" /></Ico>
      </span>
    </div>
  );
}

function StatusBar() {
  return (
    <footer className="flex h-6 shrink-0 items-center bg-[#cccccc] text-[11px] text-[#111]">
      <p className="w-[892px] shrink-0 pl-0.5 text-black">
        Click to select, TAB for alternates, CTRL adds, SHIFT unselects.
      </p>
      <button type="button" aria-label="Worksets" className="flex w-[29px] shrink-0 pl-1">
        <Ico w={17} h={17}>
          <path d="M6 6V3l3 -2h3v4h-3" stroke="#1d7a2c" fill="#c8ecc8" />
          <path d="M1 8l3 -1.500l4 1v7l-3 1.500l-4 -1z" fill="#5aaeea" stroke="#1d5f9a" />
          <path d="M1 8l4 1.500l3 -2M5 9.500V16" stroke="#fff" strokeWidth="1" />
          <path d="M11 6v3l1.500 1v6h2v-6l1.500 -1V6l-2 2z" fill="#e8ecf0" stroke="#444" strokeWidth="1" />
        </Ico>
      </button>
      <StatusCombo id="workset" label="Active workset" value="" />
      <span className="flex w-[62px] shrink-0 items-center gap-1 pl-2">
        <Ico w={16} h={16} className="opacity-50">
          <path d="M5 1h10v5h-4l-3 4v-4h-3z" fill="#ddd" />
          <path d="M1 15c1 -4 3 -6 5 -6l3 1l-1 5z" fill="#777" />
        </Ico>
        :0
      </span>
      <button type="button" aria-label="Design options" className="w-[26px] shrink-0">
        <Ico w={16} h={16}>
          <rect x="1" y="1" width="14" height="14" fill="#f4f6f8" />
          <path d="M1 2.500h14" strokeWidth="2" />
          <path d="M3 6h2M6 7h6M7 10h6M7 13h6M4 7v6h2" strokeWidth="1" />
        </Ico>
      </button>
      <button type="button" aria-label="Pick to edit" className="w-6 shrink-0">
        <Ico w={16} h={16} className="opacity-60">
          <path d="M2 1h13v14h-9v-3h-4z" fill="#8a8a8a" stroke="none" />
          <path d="M0 12h5v3l5 -4.500l-5 -4.500v3h-5z" fill="#ddd" stroke="#777" strokeWidth="1" />
        </Ico>
      </button>
      <StatusCombo id="design-option" label="Active design option" value="Main Model" />
      <div className="ml-auto flex items-center pr-[72px]">
        {selectionTools.map(([label, icon]) => (
          <button key={label} type="button" aria-label={label} className="flex w-[26px] justify-center">
            <Ico w={18} h={17}>{icon}</Ico>
          </button>
        ))}
        <button type="button" className="flex items-center pl-0.5" aria-label="Filter">
          <Ico w={17} h={16}>
            <path d="M1 1h15v2l-6 6v6l-3 -2v-4l-6 -6z" fill="#aab2bc" stroke="#59616b" />
          </Ico>
          <span>:0</span>
        </button>
      </div>
    </footer>
  );
}

export default function App() {
  return (
    <div className={`flex h-screen flex-col overflow-hidden bg-[#cccccc] ${UI_FONT}`}>
      <TitleBar />
      <TabRow />
      <Ribbon />
      <div className="flex min-h-0 flex-1 pt-0.5">
        <Properties />
        <Workspace />
      </div>
      <StatusBar />
    </div>
  );
}
